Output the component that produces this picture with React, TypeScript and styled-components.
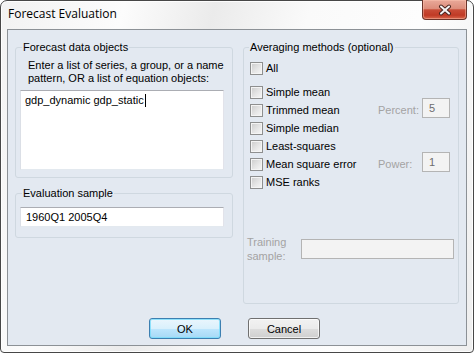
import styled, { createGlobalStyle } from 'styled-components';

const GlobalStyle = createGlobalStyle`
  html, body {
    margin: 0;
    padding: 0;
    background: #ffffff;
  }
  body {
    font-family: 'Liberation Sans', Arial, sans-serif;
    font-size: 11px;
    color: #000000;
  }
`;

const methods = [
  { label: 'Simple mean' },
  { label: 'Trimmed mean', side: 'Percent:', value: '5' },
  { label: 'Simple median' },
  { label: 'Least-squares' },
  { label: 'Mean square error', side: 'Power:', value: '1' },
  { label: 'MSE ranks' },
];

export default function App() {
  return (
    <>
      <GlobalStyle />
      <Window>
        <TitleBar>
          <Title>Forecast Evaluation</Title>
          <CloseButton>
            <svg width="14" height="12" viewBox="0 0 14 12">
              <line x1="3" y1="2.5" x2="11" y2="9.5" stroke="#4a2620" strokeWidth="4" strokeLinecap="round" />
              <line x1="11" y1="2.5" x2="3" y2="9.5" stroke="#4a2620" strokeWidth="4" strokeLinecap="round" />
              <line x1="3" y1="2.5" x2="11" y2="9.5" stroke="#f4f4f4" strokeWidth="2" strokeLinecap="round" />
              <line x1="11" y1="2.5" x2="3" y2="9.5" stroke="#f4f4f4" strokeWidth="2" strokeLinecap="round" />
            </svg>
          </CloseButton>
        </TitleBar>
        <Client>
          <Columns>
            <LeftColumn>
              <Group $pad="5px 8px 7px 4px">
                <Legend $offset={2}>Forecast data objects</Legend>
                <Description>
                  Enter a list of series, a group, or a name
                  <br />
                  pattern, OR a list of equation objects:
                </Description>
                <TextArea>
                  gdp_dynamic gdp_static
                  <Caret />
                </TextArea>
              </Group>
              <Group $pad="7px 8px 10px 4px">
                <Legend $offset={2}>Evaluation sample</Legend>
                <TextInput>1960Q1 2005Q4</TextInput>
              </Group>
            </LeftColumn>
            <Group $pad="5px 8px 40px 6px">
              <Legend $offset={-1}>Averaging methods (optional)</Legend>
              <CheckRow>
                <CheckBox />
                <CheckLabel>All</CheckLabel>
              </CheckRow>
              <MethodList>
                {methods.map((m) => (
                  <CheckRow key={m.label}>
                    <CheckBox />
                    <CheckLabel>{m.label}</CheckLabel>
                    {m.side && (
                      <>
                        <SideLabel>{m.side}</SideLabel>
                        <SmallInput>{m.value}</SmallInput>
                      </>
                    )}
                  </CheckRow>
                ))}
              </MethodList>
              <TrainingRow>
                <TrainingLabel>
                  Training
                  <br />
                  sample:
                </TrainingLabel>
                <TrainingInput />
              </TrainingRow>
            </Group>
          </Columns>
          <ButtonRow>
            <Button $primary>OK</Button>
            <Button>Cancel</Button>
          </ButtonRow>
        </Client>
      </Window>
    </>
  );
}

const Window = styled.div`
  box-sizing: border-box;
  width: 474px;
  height: 353px;
  display: flex;
  flex-direction: column;
  padding: 0 6px 6px 6px;
  border: 1px solid #474747;
  border-radius: 7px 7px 4px 4px;
  background: linear-gradient(
    105deg,
    #f2f2f2 0%,
    #fcfcfc 22%,
    #ebebeb 38%,
    #fafafa 55%,
    #fdfdfd 75%,
    #eeeeee 100%
  );
  box-shadow: inset 0 0 0 1px rgba(255, 255, 255, 0.85);
`;

const TitleBar = styled.div`
  height: 28px;
  flex: none;
  display: flex;
  align-items: flex-start;
`;

const Title = styled.span`
  margin: 5px 0 0 1px;
  font-family: 'Open Sans', 'Noto Sans', sans-serif;
  font-size: 12px;
  line-height: 16px;
  color: #000000;
`;

const CloseButton = styled.div`
  box-sizing: border-box;
  width: 45px;
  height: 20px;
  margin: -1px 0 0 auto;
  display: flex;
  align-items: center;
  justify-content: center;
  border: 1px solid #6b342a;
  border-top: none;
  border-radius: 0 0 4px 4px;
  background: linear-gradient(
    #e9a999 0%,
    #dd8d7b 45%,
    #c84c37 52%,
    #c03a25 80%,
    #d9674c 100%
  );
  box-shadow: inset 0 0 0 1px rgba(255, 200, 180, 0.45);
`;

const Client = styled.div`
  flex: 1;
  display: flex;
  flex-direction: column;
  padding: 11px 7px 0 7px;
  border: 1px solid #8c9196;
  background: #e3e9f1;
`;

const Columns = styled.div`
  display: grid;
  grid-template-columns: 218px 216px;
  column-gap: 10px;
  align-items: start;
`;

const LeftColumn = styled.div`
  display: flex;
  flex-direction: column;
  gap: 9px;
`;

const Group = styled.fieldset<{ $pad: string }>`
  margin: 0;
  min-width: 0;
  padding: ${(p) => p.$pad};
  border: 1px solid #cfd8e0;
  border-radius: 3px;
`;

const Legend = styled.legend<{ $offset: number }>`
  margin-left: ${(p) => p.$offset}px;
  padding: 0 1px;
  font-size: 11px;
  line-height: 13px;
`;

const Description = styled.div`
  padding-left: 8px;
  line-height: 13px;
`;

const TextArea = styled.div`
  box-sizing: border-box;
  height: 80px;
  margin-top: 5px;
  padding: 3px 4px;
  line-height: 13px;
  background: #ffffff;
  border: 1px solid;
  border-color: #abadb3 #e2e3ea #e3e9ef #dbdfe6;
`;

const Caret = styled.span`
  display: inline-block;
  width: 1px;
  height: 13px;
  margin-left: 1px;
  vertical-align: top;
  background: #000000;
`;

const TextInput = styled.div`
  box-sizing: border-box;
  height: 20px;
  padding: 0 5px;
  line-height: 18px;
  background: #ffffff;
  border: 1px solid;
  border-color: #abadb3 #e2e3ea #e3e9ef #dbdfe6;
`;

const MethodList = styled.div`
  margin-top: 6px;
`;

const CheckRow = styled.div`
  height: 18px;
  display: flex;
  align-items: center;
`;

const CheckBox = styled.span`
  box-sizing: border-box;
  width: 13px;
  height: 13px;
  flex: none;
  margin-right: 3px;
  border: 1px solid #8e8f8f;
  background: linear-gradient(135deg, #cbcbcb 0%, #e6e6e6 55%, #f7f7f7 100%);
  box-shadow: inset 0 0 0 1px #f4f4f4;
`;

const CheckLabel = styled.span`
  flex: 1;
  line-height: 13px;
`;

const SideLabel = styled.span`
  width: 44px;
  color: #a3a3a3;
  line-height: 13px;
`;

const SmallInput = styled.div`
  box-sizing: border-box;
  width: 28px;
  height: 20px;
  align-self: flex-start;
  margin-top: -3px;
  padding: 0 6px;
  line-height: 18px;
  color: #6d6d6d;
  background: #f3f3f3;
  border: 1px solid #b4b4b4;
`;

const TrainingRow = styled.div`
  display: flex;
  align-items: center;
  margin: 44px -4px 0 -3px;
`;

const TrainingLabel = styled.div`
  width: 54px;
  line-height: 14px;
  color: #a3a3a3;
`;

const TrainingInput = styled.div`
  box-sizing: border-box;
  flex: 1;
  height: 20px;
  background: #f3f3f3;
  border: 1px solid #b4b4b4;
`;

const ButtonRow = styled.div`
  display: flex;
  justify-content: center;
  gap: 27px;
  margin-top: 14px;
  padding-right: 5px;
`;

const Button = styled.div<{ $primary?: boolean }>`
  box-sizing: border-box;
  width: 72px;
  height: 21px;
  display: flex;
  align-items: center;
  justify-content: center;
  border-radius: 3px;
  border: 1px solid ${(p) => (p.$primary ? '#3c7fb1' : '#707070')};
  background: ${(p) =>
    p.$primary
      ? 'linear-gradient(#eaf6fd 0%, #d9f0fc 50%, #bee6fd 51%, #a7d9f5 100%)'
      : 'linear-gradient(#f2f2f2 0%, #ebebeb 50%, #dddddd 51%, #cfcfcf 100%)'};
  box-shadow: inset 0 0 0 1px
    ${(p) => (p.$primary ? 'rgba(120, 220, 250, 0.8)' : 'rgba(255, 255, 255, 0.7)')};
`;
